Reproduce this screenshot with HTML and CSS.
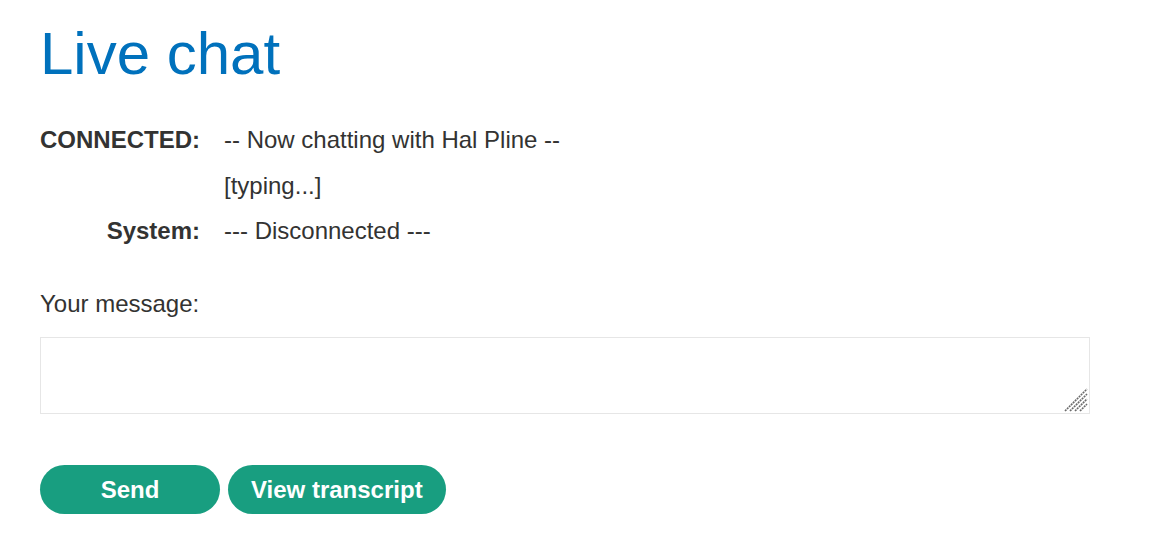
FILE: index.html
```html
<!DOCTYPE html>
<html lang="en">
<head>
<meta charset="utf-8">
<title>Live chat</title>
<link rel="stylesheet" href="styles.css">
</head>
<body>
<main class="page">
  <h1 class="title">Live chat</h1>
  <div class="chat">
    <div class="who">CONNECTED:</div>
    <div class="msg">-- Now chatting with Hal Pline --</div>
    <div class="who"></div>
    <div class="msg">[typing...]</div>
    <div class="who">System:</div>
    <div class="msg">--- Disconnected ---</div>
  </div>
  <form class="form">
    <label class="label" for="message">Your message:</label>
    <div class="field">
      <textarea id="message" class="input"></textarea>
      <svg class="grip" width="24" height="24" viewBox="0 0 24 24" aria-hidden="true">
        <g stroke="#6b6b6b" stroke-width="1.6" stroke-dasharray="2 0.8">
          <line x1="1" y1="23" x2="23" y2="1"/>
          <line x1="6" y1="23" x2="23" y2="6"/>
          <line x1="11" y1="23" x2="23" y2="11"/>
          <line x1="16" y1="23" x2="23" y2="16"/>
        </g>
      </svg>
    </div>
    <div class="actions">
      <button type="button" class="btn">Send</button>
      <button type="button" class="btn">View transcript</button>
    </div>
  </form>
</main>
</body>
</html>
```
FILE: styles.css
```css
html, body {
  margin: 0;
  padding: 0;
  background: #ffffff;
}
body {
  font-family: "Liberation Sans", Arial, sans-serif;
  color: #333332;
  font-size: 24px;
}
.page {
  padding: 19px 71px 0 40px;
}
.title {
  margin: 0;
  font-size: 60px;
  font-weight: normal;
  line-height: 69px;
  color: #0071bc;
}
.chat {
  margin-top: 29px;
  display: grid;
  grid-template-columns: 160px auto;
  column-gap: 24px;
  line-height: 45.5px;
}
.who {
  text-align: right;
  font-weight: bold;
}
.form {
  margin-top: 36px;
  display: flex;
  flex-direction: column;
}
.label {
  line-height: 27.6px;
}
.field {
  position: relative;
  margin-top: 20px;
  width: 1050px;
  height: 77px;
}
.input {
  display: block;
  box-sizing: border-box;
  width: 100%;
  height: 100%;
  border: 1px solid #e6e6e6;
  padding: 6px;
  font-family: inherit;
  font-size: 24px;
  outline: none;
  resize: none;
}
.grip {
  position: absolute;
  right: 2px;
  bottom: 2px;
  pointer-events: none;
}
.actions {
  margin-top: 51px;
  display: flex;
  gap: 8px;
}
.btn {
  min-width: 180px;
  height: 49px;
  padding: 0 23px;
  border: none;
  border-radius: 25px;
  background: #189e80;
  color: #ffffff;
  font-family: inherit;
  font-size: 24px;
  font-weight: bold;
  cursor: pointer;
}
```
